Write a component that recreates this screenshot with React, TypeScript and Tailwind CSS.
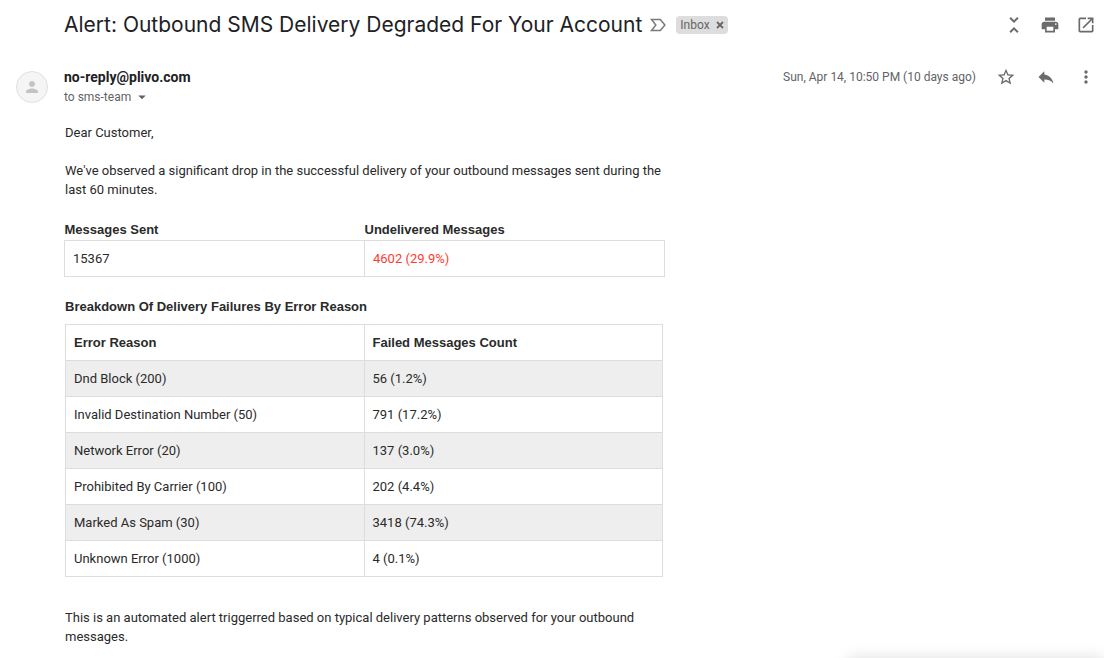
import { MdOutlineStarBorder, MdReply, MdMoreVert, MdPrint, MdOpenInNew, MdUnfoldLess, MdPerson, MdArrowDropDown } from "react-icons/md";

const reasons = [
  ["Dnd Block (200)", "56 (1.2%)"],
  ["Invalid Destination Number (50)", "791 (17.2%)"],
  ["Network Error (20)", "137 (3.0%)"],
  ["Prohibited By Carrier (100)", "202 (4.4%)"],
  ["Marked As Spam (30)", "3418 (74.3%)"],
  ["Unknown Error (1000)", "4 (0.1%)"],
];

function ImportanceMarker() {
  return (
    <svg width="16" height="14" viewBox="0 0 16 14" fill="none" stroke="currentColor" strokeWidth="1.5">
      <path d="M1.5 1.5H10.3L14.9 7L10.3 12.5H1.5L5.8 7Z" />
    </svg>
  );
}

function Cross() {
  return (
    <svg width="8" height="8" viewBox="0 0 8 8" fill="none" stroke="currentColor" strokeWidth="1.8">
      <path d="M1 1L7 7M7 1L1 7" />
    </svg>
  );
}

export default function App() {
  return (
    <main className="relative min-h-screen overflow-hidden bg-white font-['Roboto',sans-serif] text-[13px] leading-[19px] text-[#2a2a2a]">
      <header className="flex h-[50px] items-center pr-2 pl-16">
        <h1 className="font-['Inter',sans-serif] text-[21px] leading-7 text-[#202124]">Alert: Outbound SMS Delivery Degraded For Your Account</h1>
        <button aria-label="Mark as important" className="ml-2 text-[#7a7a7a]"><ImportanceMarker /></button>
        <span className="ml-2.5 flex h-[18px] items-center gap-1.5 rounded bg-[#ddd] px-1 text-xs text-[#666]">
          Inbox <button aria-label="Remove label Inbox"><Cross /></button>
        </span>
        <div className="ml-auto flex items-center gap-4 text-[#6b6b6b]">
          <button aria-label="Collapse all"><MdUnfoldLess size={24} /></button>
          <button aria-label="Print" className="-ml-0.5"><MdPrint size={20} /></button>
          <button aria-label="Open in new window"><MdOpenInNew size={20} /></button>
        </div>
      </header>
      <section className="flex pt-[17px] pr-2 pl-4">
        <div className="mt-1 flex size-8 items-center justify-center rounded-full border border-[#e0e0e0] bg-[#f5f5f5] text-[#c4c4c4]"><MdPerson size={18} /></div>
        <div className="ml-4">
          <div className="text-sm leading-5 font-bold text-[#202124]">no-reply@plivo.com</div>
          <button className="flex items-center gap-0.5 text-xs leading-5 text-[#5f6368]">to sms-team <MdArrowDropDown size={18} /></button>
        </div>
        <div className="ml-auto flex h-5 items-center text-xs text-[#5f6368]">
          <time>Sun, Apr 14, 10:50 PM (10 days ago)</time>
          <div className="ml-5 flex gap-5 text-[#6b6b6b]">
            <button aria-label="Star"><MdOutlineStarBorder size={20} /></button>
            <button aria-label="Reply"><MdReply size={20} /></button>
            <button aria-label="More"><MdMoreVert size={20} /></button>
          </div>
        </div>
      </section>
      <article className="ml-16 max-w-[602px] pt-4">
        <p className="pl-px">Dear Customer,</p>
        <p className="mt-[19px] pl-px">We've observed a significant drop in the successful delivery of your outbound messages sent during the last 60 minutes.</p>
        <table className="mt-[21px] w-[601px] table-fixed border-collapse text-left">
          <thead><tr className="h-5 font-['Liberation_Sans',sans-serif]"><th>Messages Sent</th><th>Undelivered Messages</th></tr></thead>
          <tbody><tr className="h-9"><td className="border border-[#ddd] px-2">15367</td><td className="border border-[#ddd] px-2 text-[#ff3b30]">4602 (29.9%)</td></tr></tbody>
        </table>
        <h2 className="mt-5 pl-px font-['Liberation_Sans',sans-serif] font-bold">Breakdown Of Delivery Failures By Error Reason</h2>
        <table className="mt-2 ml-px w-[598px] table-fixed border-collapse text-left">
          <thead><tr className="h-9 font-['Liberation_Sans',sans-serif]"><th className="border border-[#ddd] px-2">Error Reason</th><th className="border border-[#ddd] px-2">Failed Messages Count</th></tr></thead>
          <tbody>{reasons.map(([reason, count]) => <tr key={reason} className="h-9 odd:bg-[#eee]"><td className="border border-[#ddd] px-2">{reason}</td><td className="border border-[#ddd] px-2">{count}</td></tr>)}</tbody>
        </table>
        <p className="mt-[31px] pl-px">This is an automated alert triggerred based on typical delivery patterns observed for your outbound messages.</p>
      </article>
      <div className="absolute top-full right-0 h-10 w-64 shadow-[0_0_16px_rgba(0,0,0,0.13)]" />
    </main>
  );
}
